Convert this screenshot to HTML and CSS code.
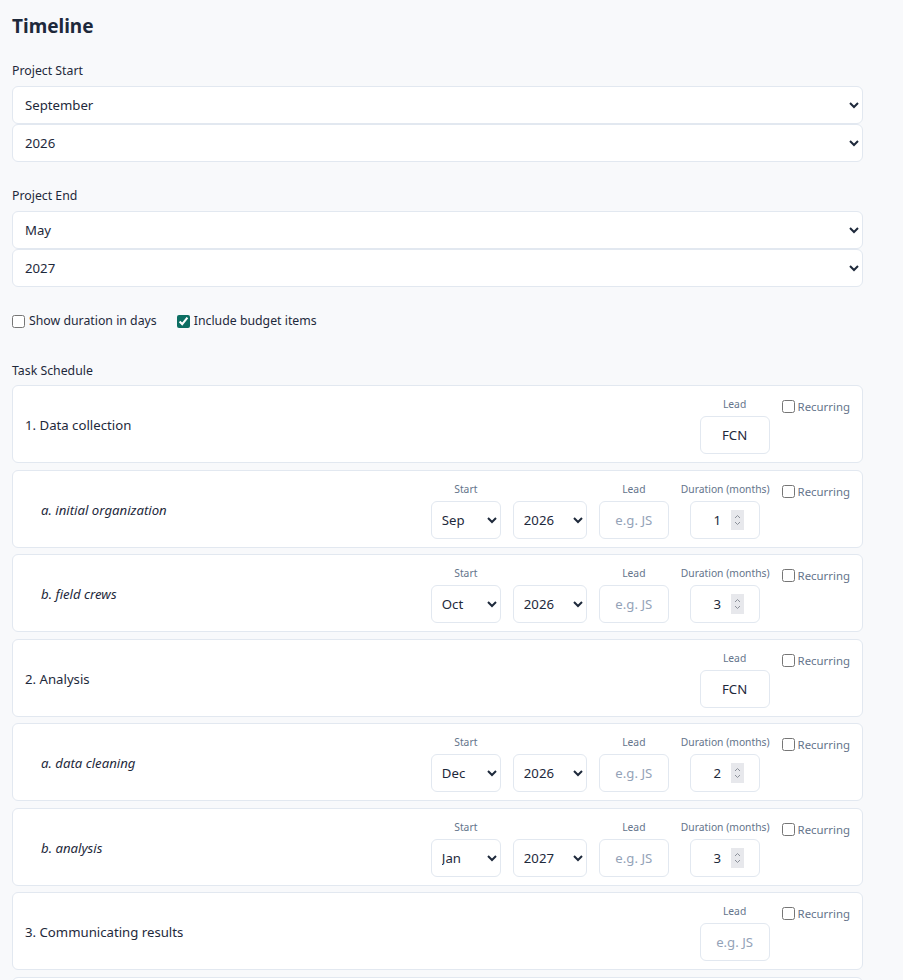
FILE: index.html
```html
<!DOCTYPE html>
<html lang="en">
<head>
    <meta charset="UTF-8">
    <meta name="viewport" content="width=device-width, initial-scale=1.0">
    <title>Timeline</title>
    <link rel="stylesheet" href="styles.css">
</head>
<body>

<div class="container">
    <h1>Timeline</h1>

    <div class="group">
        <label class="group-label">Project Start</label>
        <select class="wide">
            <option>September</option>
        </select>
        <select class="wide">
            <option>2026</option>
        </select>
    </div>

    <div class="group">
        <label class="group-label">Project End</label>
        <select class="wide">
            <option>May</option>
        </select>
        <select class="wide">
            <option>2027</option>
        </select>
    </div>

    <div class="options">
        <label><input type="checkbox"> Show duration in days</label>
        <label><input type="checkbox" checked> Include budget items</label>
    </div>

    <div class="group-label schedule-label">Task Schedule</div>

    <!-- task 1 -->
    <div class="task">
        <div class="task-name">1. Data collection</div>
        <div class="fields">
            <div class="field">
                <span class="field-label">Lead</span>
                <input type="text" class="small" value="FCN">
            </div>
            <label class="recurring"><input type="checkbox"> Recurring</label>
        </div>
    </div>

    <div class="task sub">
        <div class="task-name">a. initial organization</div>
        <div class="fields">
            <div class="field">
                <span class="field-label">Start</span>
                <select class="month"><option>Sep</option></select>
            </div>
            <div class="field">
                <span class="field-label">&nbsp;</span>
                <select class="year"><option>2026</option></select>
            </div>
            <div class="field">
                <span class="field-label">Lead</span>
                <input type="text" class="small" placeholder="e.g. JS">
            </div>
            <div class="field">
                <span class="field-label">Duration (months)</span>
                <span class="number-wrap">
                    <input type="number" class="small number" value="1">
                    <span class="spinner"><svg width="13" height="20" viewBox="0 0 13 20"><path d="M4 8l2.5-2.5L9 8M4 12l2.5 2.5L9 12" fill="none" stroke="#8b9099" stroke-width="1"/></svg></span>
                </span>
            </div>
            <label class="recurring"><input type="checkbox"> Recurring</label>
        </div>
    </div>

    <div class="task sub">
        <div class="task-name">b. field crews</div>
        <div class="fields">
            <div class="field">
                <span class="field-label">Start</span>
                <select class="month"><option>Oct</option></select>
            </div>
            <div class="field">
                <span class="field-label">&nbsp;</span>
                <select class="year"><option>2026</option></select>
            </div>
            <div class="field">
                <span class="field-label">Lead</span>
                <input type="text" class="small" placeholder="e.g. JS">
            </div>
            <div class="field">
                <span class="field-label">Duration (months)</span>
                <span class="number-wrap">
                    <input type="number" class="small number" value="3">
                    <span class="spinner"><svg width="13" height="20" viewBox="0 0 13 20"><path d="M4 8l2.5-2.5L9 8M4 12l2.5 2.5L9 12" fill="none" stroke="#8b9099" stroke-width="1"/></svg></span>
                </span>
            </div>
            <label class="recurring"><input type="checkbox"> Recurring</label>
        </div>
    </div>

    <!-- task 2 -->
    <div class="task">
        <div class="task-name">2. Analysis</div>
        <div class="fields">
            <div class="field">
                <span class="field-label">Lead</span>
                <input type="text" class="small" value="FCN">
            </div>
            <label class="recurring"><input type="checkbox"> Recurring</label>
        </div>
    </div>

    <div class="task sub">
        <div class="task-name">a. data cleaning</div>
        <div class="fields">
            <div class="field">
                <span class="field-label">Start</span>
                <select class="month"><option>Dec</option></select>
            </div>
            <div class="field">
                <span class="field-label">&nbsp;</span>
                <select class="year"><option>2026</option></select>
            </div>
            <div class="field">
                <span class="field-label">Lead</span>
                <input type="text" class="small" placeholder="e.g. JS">
            </div>
            <div class="field">
                <span class="field-label">Duration (months)</span>
                <span class="number-wrap">
                    <input type="number" class="small number" value="2">
                    <span class="spinner"><svg width="13" height="20" viewBox="0 0 13 20"><path d="M4 8l2.5-2.5L9 8M4 12l2.5 2.5L9 12" fill="none" stroke="#8b9099" stroke-width="1"/></svg></span>
                </span>
            </div>
            <label class="recurring"><input type="checkbox"> Recurring</label>
        </div>
    </div>

    <div class="task sub">
        <div class="task-name">b. analysis</div>
        <div class="fields">
            <div class="field">
                <span class="field-label">Start</span>
                <select class="month"><option>Jan</option></select>
            </div>
            <div class="field">
                <span class="field-label">&nbsp;</span>
                <select class="year"><option>2027</option></select>
            </div>
            <div class="field">
                <span class="field-label">Lead</span>
                <input type="text" class="small" placeholder="e.g. JS">
            </div>
            <div class="field">
                <span class="field-label">Duration (months)</span>
                <span class="number-wrap">
                    <input type="number" class="small number" value="3">
                    <span class="spinner"><svg width="13" height="20" viewBox="0 0 13 20"><path d="M4 8l2.5-2.5L9 8M4 12l2.5 2.5L9 12" fill="none" stroke="#8b9099" stroke-width="1"/></svg></span>
                </span>
            </div>
            <label class="recurring"><input type="checkbox"> Recurring</label>
        </div>
    </div>

    <!-- task 3 -->
    <div class="task">
        <div class="task-name">3. Communicating results</div>
        <div class="fields">
            <div class="field">
                <span class="field-label">Lead</span>
                <input type="text" class="small" placeholder="e.g. JS">
            </div>
            <label class="recurring"><input type="checkbox"> Recurring</label>
        </div>
    </div>

    <div class="task sub last">
        <div class="task-name">&nbsp;</div>
    </div>
</div>

</body>
</html>
```

FILE: styles.css
```css
body {
    margin: 0;
    padding: 12px 40px 12px 12px;
    font-family: "Noto Sans", "Open Sans", sans-serif;
    background-color: #f8f9fb;
    color: #1e293b;
}
h1 {
    margin: 0 0 21px;
    font-size: 19px;
    line-height: 28px;
    font-weight: 700;
}
.group {
    margin-bottom: 24px;
}
.group-label {
    display: block;
    font-size: 12.3px;
    line-height: 19px;
    margin-bottom: 6px;
}
select, input {
    font-family: inherit;
    color: #1e293b;
    background-color: #fff;
    border: 1px solid #e2e8f0;
    border-radius: 6px;
    box-sizing: border-box;
    height: 38px;
    font-size: 13.2px;
}
select.wide {
    display: block;
    width: 100%;
    padding: 0 8px;
}
.options {
    display: flex;
    gap: 20px;
    font-size: 12.3px;
    line-height: 20px;
    margin: 2px 0 30px;
}
.options label {
    display: flex;
    align-items: center;
    gap: 4px;
}
input[type="checkbox"] {
    width: 13px;
    height: 13px;
    margin: 0;
    accent-color: #0d6e63;
}
.schedule-label {
    margin-bottom: 5px;
}
.task {
    display: flex;
    justify-content: space-between;
    align-items: center;
    background-color: #fff;
    border: 1px solid #e2e8f0;
    border-radius: 6px;
    padding: 10px 12px 8px;
    margin-bottom: 6.5px;
}
.task.last {
    height: 40px;
}
.task-name {
    font-size: 13.2px;
}
.sub .task-name {
    font-style: italic;
    padding-left: 16px;
}
.fields {
    display: flex;
    gap: 12px;
    align-items: flex-start;
}
.field {
    display: flex;
    flex-direction: column;
    align-items: center;
    gap: 3px;
}
.field-label {
    font-size: 10.3px;
    line-height: 17px;
    color: #64748b;
}
select.month {
    width: 70px;
    padding: 0 6px;
}
select.year {
    width: 74px;
    padding: 0 6px;
}
input.small {
    width: 70px;
    text-align: center;
    padding: 0 6px;
}
input::placeholder {
    color: #94a3b8;
}
.number-wrap {
    position: relative;
    display: block;
}
input.number {
    padding: 0 22px 0 6px;
    -moz-appearance: textfield;
}
input.number::-webkit-inner-spin-button,
input.number::-webkit-outer-spin-button {
    -webkit-appearance: none;
    margin: 0;
}
.spinner {
    position: absolute;
    top: 9px;
    right: 16px;
    width: 13px;
    height: 20px;
    background-color: #e7e8ec;
}
.spinner svg {
    display: block;
}
.recurring {
    display: flex;
    align-items: center;
    gap: 3px;
    font-size: 11.4px;
    color: #64748b;
    margin-top: 3px;
}
```
